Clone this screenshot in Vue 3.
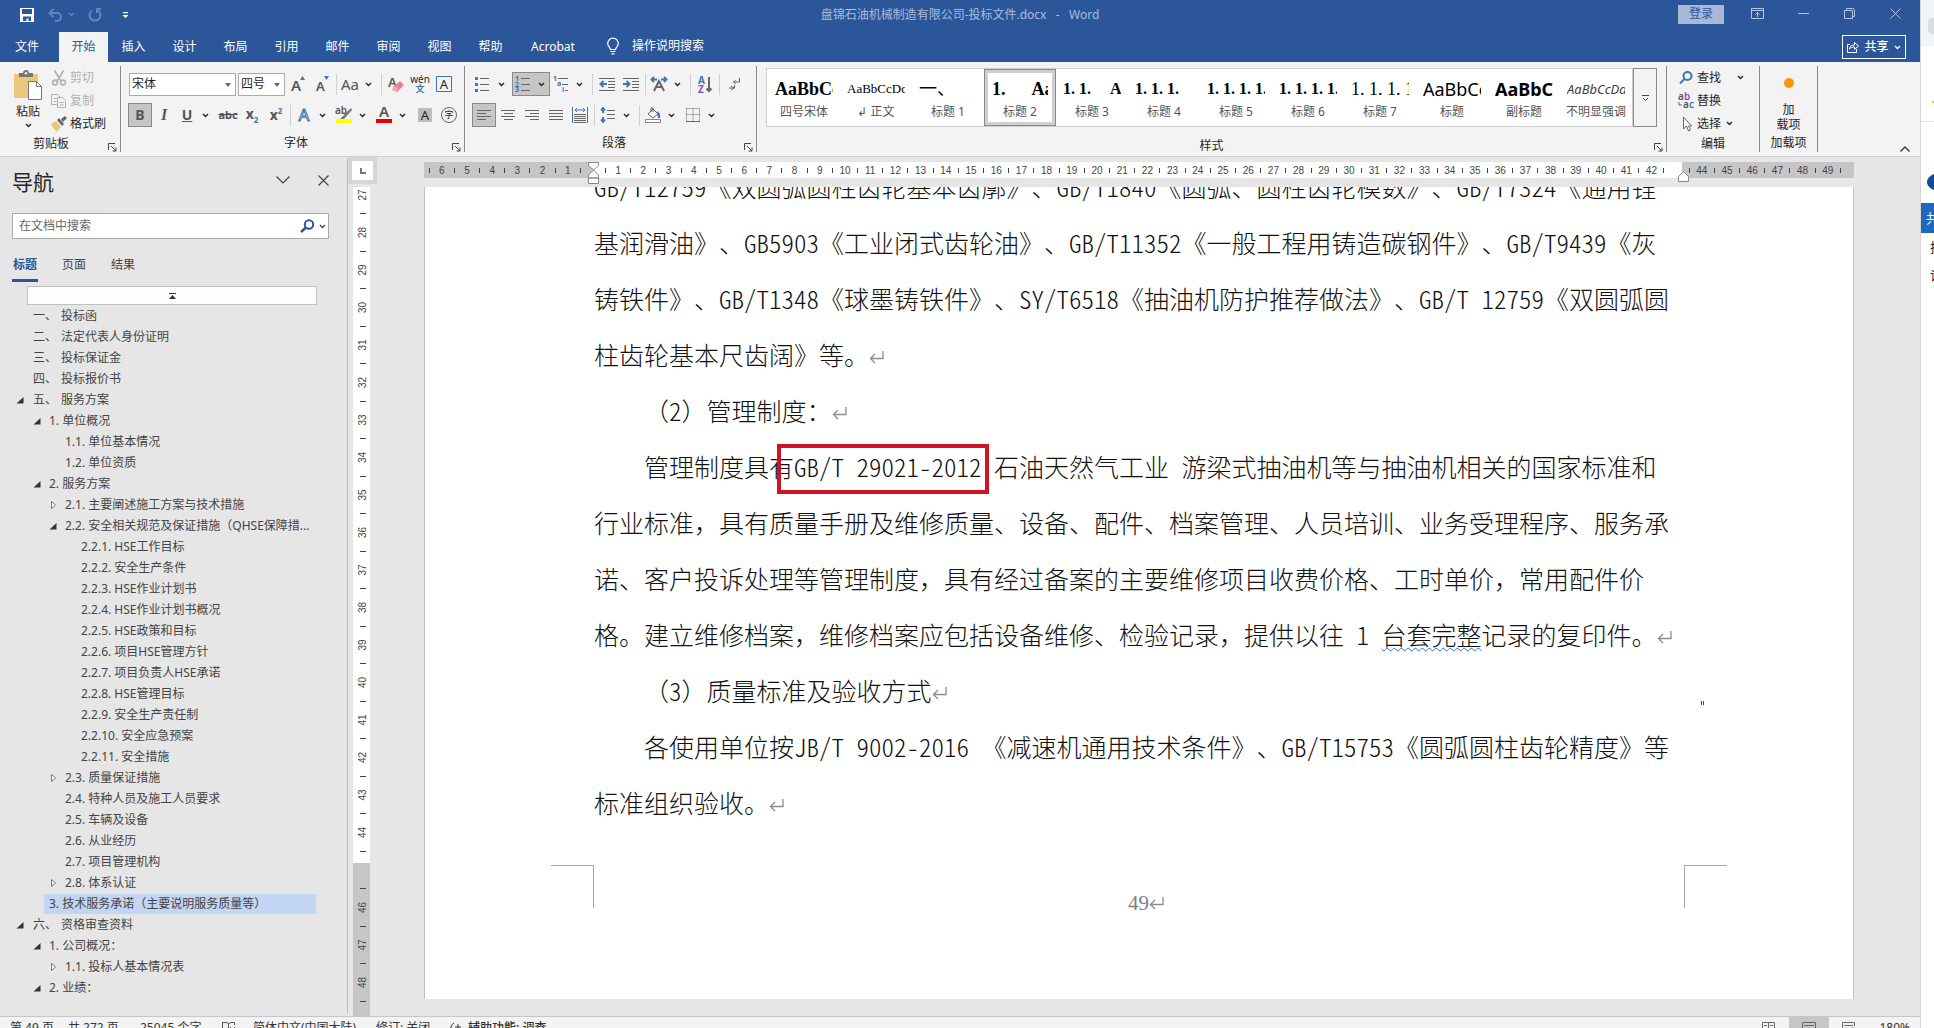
<template>
  <div class="desktop">
    <div class="word">
      <!-- 标题栏 -->
      <header class="titlebar">
        <div class="quick">
          <button class="quick-btn" aria-label="保存">
            <svg width="14" height="14" viewBox="0 0 14 14">
              <path d="M0 0h14v14H0z" fill="#fff" />
              <path d="M2 1h10v5H2zM3 8.500h8V13H8.500v-2.500h-2V13H3z" fill="#2b579a" />
            </svg>
          </button>
          <button class="quick-btn undo" aria-label="撤消">
            <svg width="28" height="14" viewBox="0 0 28 14" fill="none" stroke="#5d86c4" stroke-width="2">
              <path d="M5.500 1L1.500 5l4 4M2 5h7a4 4 0 0 1 0 8H7" />
              <path d="M21 5l2.500 2.500L26 5" stroke-width="1.300" />
            </svg>
          </button>
          <button class="quick-btn" aria-label="恢复">
            <svg width="14" height="14" viewBox="0 0 14 14" fill="none" stroke="#5d86c4" stroke-width="2">
              <path d="M4 2.500a5.500 5.500 0 1 0 6 0M8 1h5M9 0v5" />
            </svg>
          </button>
          <button class="quick-btn more" aria-label="自定义快速访问工具栏">
            <svg width="7" height="7" viewBox="0 0 7 7" fill="#fff"><path d="M1 0h5v1.200H1zM.5 3h6L3.500 6z" /></svg>
          </button>
        </div>
        <div class="doc-name">盘锦石油机械制造有限公司-投标文件.docx&nbsp;&nbsp; -&nbsp;&nbsp; Word</div>
        <div class="window-ctl">
          <button class="login">登录</button>
          <button class="ctl" aria-label="功能区显示选项">
            <svg width="13" height="11" viewBox="0 0 13 11"><path d="M.5.5h12v10H.5zM.5 2.500h12M6.500 9V4.500M4.500 6.500l2-2 2 2" /></svg>
          </button>
          <button class="ctl" aria-label="最小化">
            <svg width="11" height="11" viewBox="0 0 11 11"><path d="M0 5.500h11" /></svg>
          </button>
          <button class="ctl" aria-label="还原">
            <svg width="11" height="11" viewBox="0 0 11 11"><path d="M.5 2.500h8v8h-8zM2.500 2.500v-2h6q2 0 2 2v6h-2" /></svg>
          </button>
          <button class="ctl" aria-label="关闭">
            <svg width="11" height="11" viewBox="0 0 11 11"><path d="M.5.500l10 10M10.500.500l-10 10" /></svg>
          </button>
        </div>
      </header>

      <!-- 选项卡 -->
      <nav class="tabs">
        <button
          v-for="tab in tabs"
          :key="tab"
          class="tab"
          :class="{ active: tab === activeTab, file: tab === '文件', wide: tab === 'Acrobat' }"
          @click="activeTab = tab"
        >
          {{ tab }}
        </button>
        <button class="tell-me">
          <svg width="12" height="17" viewBox="0 0 12 17" fill="none" stroke="#fff" stroke-width="1.200">
            <path d="M3.500 11.500c0-2-2.800-3-2.800-6a5.300 5.300 0 0 1 10.600 0c0 3-2.800 4-2.800 6zM3.500 13.500h5M4.500 15.800h3" />
          </svg>
          操作说明搜索
        </button>
        <button class="share">
          <svg width="12" height="12" viewBox="0 0 12 12" fill="none" stroke="#fff">
            <path d="M3 3.500H.5v8h9V8M2.500 8c.5-3 2-4 5-4V1.500L11.500 5 7.500 8.500V6C5 6 4 6.500 2.500 8z" />
          </svg>
          共享
          <Chevron />
        </button>
      </nav>

      <!-- 功能区 -->
      <section class="ribbon">
        <div class="group clipboard">
          <div class="group-body">
            <button class="paste">
              <svg width="30" height="31" viewBox="0 0 30 31">
                <path d="M1 4h24v24H1z" fill="#ecc67c" />
                <path d="M6 7V3h4a3 3 0 0 1 6 0h4v4z" fill="#777" />
                <circle cx="13" cy="3.200" r="1.200" fill="#f3f3f3" />
                <path d="M15.500 11.500h8l5 5v13h-13z" fill="#fff" stroke="#777" />
                <path d="M23.500 11.500v5h5" fill="none" stroke="#777" />
              </svg>
              <span>粘贴</span>
              <Chevron />
            </button>
            <div class="stack">
              <button class="line-btn off">
                <svg width="16" height="16" viewBox="0 0 16 16" fill="none" stroke="#b1b1b1" stroke-width="1.600">
                  <path d="M3.500.5l6 10M12.500.5l-6 10" /><circle cx="4" cy="12.500" r="2.400" /><circle cx="12" cy="12.500" r="2.400" />
                </svg>
                剪切
              </button>
              <button class="line-btn off">
                <svg width="16" height="16" viewBox="0 0 16 16" fill="#f3f3f3" stroke="#b1b1b1">
                  <path d="M.5 1.500h6l3 3v7h-9zM2.500 5.500h3M2.500 8.500h3" />
                  <path d="M6.500 4.500h5l3 3v7h-8zM8.500 9.500h4M8.500 12h4" />
                </svg>
                复制
              </button>
              <button class="line-btn">
                <svg width="16" height="16" viewBox="0 0 16 16">
                  <path d="M0 8l5-3 5 6-4 5q-4-3-6-8z" fill="#ecc67c" />
                  <path d="M6 4l2-2 5 6-2 2zM10 3l4-3 2 2-4 4z" fill="#666" />
                </svg>
                格式刷
              </button>
            </div>
          </div>
          <div class="group-label">剪贴板<Launcher /></div>
        </div>

        <div class="group font">
          <div class="group-body rows">
            <div class="tool-row">
              <label class="combo family">
                <select aria-label="字体"><option>宋体</option></select>
                <i class="caret"></i>
              </label>
              <label class="combo size">
                <select aria-label="字号"><option>四号</option></select>
                <i class="caret"></i>
              </label>
              <button class="tool" aria-label="增大字号">
                <svg width="16" height="18" viewBox="0 0 16 18"><text x="1" y="16" class="glyph big">A</text><path d="M10 5l2.500-4L15 5z" fill="#3c78b4" /></svg>
              </button>
              <button class="tool" aria-label="减小字号">
                <svg width="16" height="18" viewBox="0 0 16 18"><text x="2" y="16" class="glyph">A</text><path d="M10 1l2.500 4L15 1z" fill="#3c78b4" /></svg>
              </button>
              <i class="sep"></i>
              <button class="split" aria-label="更改大小写"><span class="face case">Aa</span><Chevron /></button>
              <i class="sep"></i>
              <button class="tool" aria-label="清除所有格式">
                <svg width="16" height="18" viewBox="0 0 16 18">
                  <text x="0" y="12" class="glyph">A</text>
                  <path d="M5 12l7-6 4 4-7 7-4-2z" fill="#e8808f" /><path d="M4 14l3-3 3 3-2 2H5z" fill="#f3a9b4" />
                </svg>
              </button>
              <button class="tool pinyin"><span>wén</span><b>文</b></button>
              <button class="tool"><span class="framed">A</span></button>
            </div>
            <div class="tool-row">
              <button class="tool on"><b class="face">B</b></button>
              <button class="tool"><b class="face italic">I</b></button>
              <button class="split"><b class="face underline">U</b><Chevron /></button>
              <button class="tool"><b class="face strike">abc</b></button>
              <button class="tool"><b class="face">x<sub>2</sub></b></button>
              <button class="tool"><b class="face">x<sup>2</sup></b></button>
              <i class="sep"></i>
              <button class="split"><span class="face effect">A</span><Chevron /></button>
              <button class="split" aria-label="突出显示">
                <svg width="18" height="18" viewBox="0 0 18 18">
                  <text x="0" y="8" class="glyph small">ab</text>
                  <path d="M16 2l-8 8-3 3h4l8-9z" fill="#777" /><path d="M1 13h16v4H1z" fill="#ff0" />
                </svg>
                <Chevron />
              </button>
              <button class="split" aria-label="字体颜色">
                <svg width="18" height="18" viewBox="0 0 18 18"><text x="4" y="11" class="glyph big">A</text><path d="M1 13h16v4H1z" fill="#e60000" /></svg>
                <Chevron />
              </button>
              <button class="tool"><span class="shade">A</span></button>
              <button class="tool"><span class="circled">字</span></button>
            </div>
          </div>
          <div class="group-label">字体<Launcher /></div>
        </div>

        <div class="group para">
          <div class="group-body rows">
            <div class="tool-row">
              <button class="split" aria-label="项目符号">
                <svg width="16" height="16" viewBox="0 0 16 16">
                  <path d="M5 2.500h9M5 8.500h9M5 14.500h9" class="ink" />
                  <path d="M0 1h3v3H0zM0 7h3v3H0zM0 13h3v3H0z" fill="#3c78b4" />
                </svg>
                <Chevron />
              </button>
              <button class="split on" aria-label="编号">
                <svg width="16" height="16" viewBox="0 0 16 16">
                  <path d="M6 2.500h9M6 8.500h9M6 14.500h9" class="ink" />
                  <text x="0" y="5" class="tiny">1</text><text x="0" y="10.500" class="tiny">2</text><text x="0" y="16" class="tiny">3</text>
                </svg>
                <Chevron />
              </button>
              <button class="split" aria-label="多级列表">
                <svg width="16" height="16" viewBox="0 0 16 16">
                  <path d="M5 2.500h10M9 8.500h6M12 14.500h3" class="ink" />
                  <text x="0" y="5" class="tiny">1</text><text x="4" y="10" class="tiny">a</text><text x="9" y="16" class="tiny">i</text>
                </svg>
                <Chevron />
              </button>
              <i class="sep"></i>
              <button class="tool" aria-label="减少缩进量">
                <svg width="16" height="15" viewBox="0 0 16 15"><path d="M0 1.500h16M9 4.500h7M9 7.500h7M9 10.500h7M0 13.500h16" class="ink" /><path d="M8 7H2M4.500 4L1.500 7l3 3" class="blue" /></svg>
              </button>
              <button class="tool" aria-label="增加缩进量">
                <svg width="16" height="15" viewBox="0 0 16 15"><path d="M0 1.500h16M9 4.500h7M9 7.500h7M9 10.500h7M0 13.500h16" class="ink" /><path d="M0 7h6M3.500 4l3 3-3 3" class="blue" /></svg>
              </button>
              <i class="sep"></i>
              <button class="split" aria-label="中文版式">
                <svg width="18" height="16" viewBox="0 0 18 16"><path d="M4 15L9 5l5 10M6 11h6" class="ink bold" /><path d="M7 3.500H2M4 1L1.500 3.500 4 6M11 3.500h5M14 1l2.500 2.500L14 6" class="blue" /></svg>
                <Chevron />
              </button>
              <i class="sep"></i>
              <button class="tool" aria-label="排序">
                <svg width="16" height="17" viewBox="0 0 16 17"><text x="1" y="8" class="sort">A</text><text x="1" y="17" class="sort z">Z</text><path d="M12 1v14M9.500 12.500L12 15l2.500-2.500" class="ink bold" /></svg>
              </button>
              <i class="sep"></i>
              <button class="tool" aria-label="显示编辑标记">
                <svg width="13" height="14" viewBox="0 0 13 14"><path d="M11.500 1v4H5.500M7.500 3l-2 2 2 2M6.500 8v3H1M3 9l3 2-3 2" class="ink" /></svg>
              </button>
            </div>
            <div class="tool-row">
              <button class="tool on" aria-label="左对齐"><svg width="16" height="12" viewBox="0 0 16 12"><path d="M1 1.500h14M1 4.500h9M1 7.500h14M1 10.500h9" class="ink" /></svg></button>
              <button class="tool" aria-label="居中"><svg width="16" height="12" viewBox="0 0 16 12"><path d="M1 1.500h14M4 4.500h9M1 7.500h14M4 10.500h9" class="ink" /></svg></button>
              <button class="tool" aria-label="右对齐"><svg width="16" height="12" viewBox="0 0 16 12"><path d="M1 1.500h14M6 4.500h9M1 7.500h14M6 10.500h9" class="ink" /></svg></button>
              <button class="tool" aria-label="两端对齐"><svg width="16" height="12" viewBox="0 0 16 12"><path d="M1 1.500h14M1 4.500h14M1 7.500h14M1 10.500h14" class="ink" /></svg></button>
              <button class="tool" aria-label="分散对齐">
                <svg width="16" height="16" viewBox="0 0 16 16"><path d="M2 7.500h12M2 9.500h12M2 11.500h12M2 13.500h12M2 15.500h12" class="ink" /><path d="M.5 0v16M15.500 0v16M3 3h10M5 1L3 3l2 2M11 1l2 2-2 2" class="blue thin" /></svg>
              </button>
              <i class="sep"></i>
              <button class="split" aria-label="行和段落间距">
                <svg width="16" height="16" viewBox="0 0 16 16"><path d="M7 3.500h8M7 7.500h8M7 11.500h8" class="ink" /><path d="M3 1v5M1 3.500l2-2.500 2 2.500M3 10v5M1 12.500L3 15l2-2.500" class="blue" /></svg>
                <Chevron />
              </button>
              <i class="sep"></i>
              <button class="split" aria-label="底纹">
                <svg width="18" height="16" viewBox="0 0 18 16"><path d="M4 7l5-5 5 5-5 4zM7 5V1h2v4" class="ink" /><path d="M13 4q4 2 3 7h-2z" fill="#3c78b4" /><path d="M1.500 12.500h15v3h-15z" fill="#fff" stroke="#888" /></svg>
                <Chevron />
              </button>
              <button class="split" aria-label="边框">
                <svg width="14" height="14" viewBox="0 0 14 14"><path d="M.5.500h13v12.500M.5.500v12.500M7 .5v13M.5 6.500h13" class="ink dots" /><path d="M0 13.500h14" class="ink" /></svg>
                <Chevron />
              </button>
            </div>
          </div>
          <div class="group-label">段落<Launcher /></div>
        </div>

        <div class="group styles">
          <div class="group-body">
            <div class="gallery">
              <button v-for="s in styles" :key="s.name" class="style-cell" :class="{ picked: s.picked }">
                <span class="sample" :class="s.look">{{ s.sample }}</span>
                <span class="style-name">{{ s.name }}</span>
              </button>
            </div>
            <button class="gallery-more" aria-label="其他样式">
              <svg width="7" height="6" viewBox="0 0 7 6"><path d="M0 .5h7M1 3l2.500 2.500L6 3" fill="none" stroke="#444" /></svg>
            </button>
          </div>
          <div class="group-label">样式<Launcher /></div>
        </div>

        <div class="group edit">
          <div class="group-body stack">
            <button class="line-btn">
              <svg width="16" height="16" viewBox="0 0 16 16" fill="none" stroke="#3c78b4" stroke-width="2"><circle cx="9.500" cy="6" r="4" /><path d="M6.500 9L2 13.500" /></svg>
              查找<Chevron class="far" />
            </button>
            <button class="line-btn">
              <svg width="16" height="16" viewBox="0 0 16 16"><text x="0" y="7" class="glyph small">a</text><text x="6" y="7" class="glyph small z">b</text><text x="5" y="15" class="glyph small">a</text><text x="11" y="15" class="glyph small b">c</text><path d="M1 9v3h3" class="blue thin" /></svg>
              替换
            </button>
            <button class="line-btn">
              <svg width="16" height="16" viewBox="0 0 16 16"><path d="M5.500 1v12l3-3 2 5 2-1-2-4h3z" fill="#fff" stroke="#666" /></svg>
              选择<Chevron />
            </button>
          </div>
          <div class="group-label">编辑</div>
        </div>

        <div class="group addin">
          <div class="group-body">
            <button class="addin-btn"><i class="dot"></i><span>加<br />载项</span></button>
          </div>
          <div class="group-label">加载项</div>
        </div>
        <button class="collapse" aria-label="折叠功能区">
          <svg width="10" height="6" viewBox="0 0 10 6"><path d="M.5 5.500L5 1l4.500 4.500" fill="none" stroke="#333" stroke-width="1.300" /></svg>
        </button>
      </section>

      <main class="workspace">
        <!-- 导航窗格 -->
        <aside class="navpane">
          <div class="nav-head">
            <h2>导航</h2>
            <button aria-label="任务窗格选项"><svg width="14" height="8" viewBox="0 0 14 8"><path d="M.5.500L7 7 13.500.500" /></svg></button>
            <button aria-label="关闭窗格"><svg width="11" height="11" viewBox="0 0 11 11"><path d="M.5.500l10 10M10.500.500l-10 10" /></svg></button>
          </div>
          <div class="search">
            <input v-model="query" type="text" placeholder="在文档中搜索" aria-label="在文档中搜索" />
            <svg width="15" height="14" viewBox="0 0 15 14" fill="none" stroke="#2b579a" stroke-width="2"><circle cx="9" cy="5.500" r="4.200" /><path d="M6 8.500L1 13" stroke-width="2.500" /></svg>
            <Chevron />
          </div>
          <div class="nav-tabs">
            <button class="active">标题</button>
            <button>页面</button>
            <button>结果</button>
          </div>
          <button class="jump-top" aria-label="跳转到开头">
            <svg width="7" height="6" viewBox="0 0 7 6" fill="#333"><path d="M0 0h7v1H0zM3.500 2L7 6H0z" /></svg>
          </button>
          <ul class="outline">
            <li v-for="item in outline" :key="item.text" :class="['level-' + item.level, { current: item.current }]">
              <svg class="twisty" width="8" height="8" viewBox="0 0 8 8">
                <path v-if="item.fold === 'open'" d="M7.500 1v6.500H.5z" fill="#333" />
                <path v-if="item.fold === 'closed'" d="M2.500.5L6.500 4l-4 3.500z" fill="#fff" stroke="#777" />
              </svg>
              <a href="#"><span v-if="item.mark" class="mark">{{ item.mark }}</span>{{ item.text }}</a>
            </li>
          </ul>
        </aside>

        <!-- 垂直标尺 -->
        <div class="v-side">
          <div class="corner">
            <svg width="6" height="6" viewBox="0 0 6 6"><path d="M1 0v5h5" fill="none" stroke="#777" stroke-width="2" /></svg>
          </div>
          <svg class="v-ruler" width="17" height="829">
            <rect width="17" height="676" fill="#fff" />
            <rect y="676" width="17" height="153" fill="#c6c6c6" />
            <g v-for="n in vMarks" :key="n">
              <text v-if="n !== 45" :transform="`translate(13 ${vPos(n)}) rotate(-90)`" text-anchor="middle">{{ n }}</text>
              <path :d="`M7 ${Math.round(vPos(n) + 18)}.5h6`" stroke="#444" />
            </g>
          </svg>
        </div>

        <!-- 文档 -->
        <div class="doc-area">
          <svg class="h-ruler" width="100%" height="22">
            <rect y="0" width="100%" height="16" fill="#c6c6c6" />
            <rect x="170" width="1088" height="16" fill="#fff" />
            <g v-for="n in hMarks" :key="n">
              <text v-if="n > -7 && n !== 0 && n !== 43" :x="hPos(n)" y="12" text-anchor="middle">{{ Math.abs(n) }}</text>
              <path :d="`M${Math.round(hPos(n) + 12)}.5 6v5`" stroke="#444" />
            </g>
            <path d="M164.500.500h10v3l-5 4.500-5-4.500z M164.500 16v-3l5-5 5 5v3z M164.500 16h10v5.500h-10z" fill="#fff" stroke="#888" />
            <path d="M1254.500 19.500v-5l5-5 5 5v5z" fill="#fff" stroke="#888" />
          </svg>
          <article class="page">
            <div class="body">
              <p v-for="(line, i) in lines" :key="i" :class="{ indent: line.indent }">
                <span v-for="(part, j) in split(line.text)" :key="j" :class="part.kind">{{ part.text }}</span><ReturnMark v-if="line.end" />
              </p>
            </div>
            <i class="callout"></i>
            <i class="speck"></i>
            <footer class="page-foot">
              <i class="crop left"></i>
              <span class="page-no">49<ReturnMark /></span>
              <i class="crop right"></i>
            </footer>
          </article>
        </div>
      </main>

      <!-- 状态栏 -->
      <footer class="statusbar">
        <div class="status-inner">
          <span class="w58">第 49 页</span>
          <span class="w72">共 272 页</span>
          <span class="w82">25045 个字</span>
          <span class="w31"><svg width="14" height="12" viewBox="0 0 14 12" fill="none" stroke="#555"><path d="M6.500 11V1.500q-2-1.500-6-1v10q4-.5 6 1zM6.500 1.500q2-1.500 6-1V3M8 5l5 6M13 5l-5 6" /></svg></span>
          <span class="w123">简体中文(中国大陆)</span>
          <span class="w73">修订: 关闭</span>
          <span class="a11y"><svg width="14" height="12" viewBox="0 0 14 12" fill="none" stroke="#333"><path d="M5 1a5.500 5.500 0 0 0 0 10M9 2v8M6 5h6M9 6l3 4" /></svg>辅助功能: 调查</span>
          <span class="views">
            <i><svg width="14" height="12" viewBox="0 0 14 12"><path d="M.5.500h6v11h-6zM6.500.500h6v11h-6zM2 3.500h3M2 6.500h3M8 3.500h3M8 6.500h3" class="ink" /></svg></i>
            <i class="on"><svg width="14" height="12" viewBox="0 0 14 12"><path d="M.5.500h13v11H.5zM2 3.500h10M2 6.500h10M2 9.500h10" class="ink" /></svg></i>
            <i><svg width="14" height="12" viewBox="0 0 14 12"><path d="M12.500 4V.5H.5v11h6M2 3.500h9M2 6.500h5M2 9.500h4" class="ink" /><circle cx="10.500" cy="8.500" r="3" fill="#777" /></svg></i>
            <span>180%</span>
          </span>
        </div>
      </footer>
    </div>

    <!-- 旁边露出的窗口 -->
    <div class="behind">
      <div class="behind-bar"><i></i></div>
      <div class="behind-fav"><i></i></div>
      <div class="behind-logo"><i></i></div>
      <div class="behind-menu">共</div>
      <div class="behind-item">技</div>
      <div class="behind-item">设</div>
    </div>
  </div>
</template>

<script setup>
import { h, ref } from "vue";

// Iconos pequeños que se repiten
const Chevron = () =>
  h("svg", { class: "chev", width: 7, height: 5, viewBox: "0 0 7 5" }, [
    h("path", { d: "M1 1l2.500 2.500L6 1", fill: "none", stroke: "currentColor", "stroke-width": 1.4 }),
  ]);

const Launcher = () =>
  h("svg", { class: "launcher", width: 9, height: 9, viewBox: "0 0 9 9" }, [
    h("path", { d: "M.5 7V.5H7M3 3l5 5M8 4.500V8H4.500", fill: "none", stroke: "#444" }),
  ]);

const ReturnMark = () =>
  h("svg", { class: "return-mark", width: 15, height: 13, viewBox: "0 0 15 13" }, [
    h("path", { d: "M14 0v7.500H1.500M6 3L1.500 7.500 6 12", fill: "none", stroke: "#8c8c8c", "stroke-width": 1.3 }),
  ]);

const tabs = ["文件", "开始", "插入", "设计", "布局", "引用", "邮件", "审阅", "视图", "帮助", "Acrobat"];
const activeTab = ref("开始");
const query = ref("");

const styles = [
  { name: "四号宋体", sample: "AaBbCc", look: "serif heavy" },
  { name: "↲ 正文", sample: "AaBbCcDdEe", look: "serif little" },
  { name: "标题 1", sample: "一、", look: "serif" },
  { name: "标题 2", sample: "1.      Aa", look: "serif heavy", picked: true },
  { name: "标题 3", sample: "1. 1.     Aa", look: "serif heavy mid" },
  { name: "标题 4", sample: "1. 1. 1.", look: "serif heavy mid" },
  { name: "标题 5", sample: "1. 1. 1. 1.", look: "serif heavy mid" },
  { name: "标题 6", sample: "1. 1. 1. 1.", look: "serif heavy mid" },
  { name: "标题 7", sample: "1. 1. 1. 1.", look: "serif" },
  { name: "标题", sample: "AaBbCc", look: "sans" },
  { name: "副标题", sample: "AaBbCc", look: "sans heavy" },
  { name: "不明显强调", sample: "AaBbCcDd", look: "sans slanted" },
];

const outline = [
  { level: 1, mark: "一、", text: "投标函" },
  { level: 1, mark: "二、", text: "法定代表人身份证明" },
  { level: 1, mark: "三、", text: "投标保证金" },
  { level: 1, mark: "四、", text: "投标报价书" },
  { level: 1, mark: "五、", text: "服务方案", fold: "open" },
  { level: 2, text: "1. 单位概况", fold: "open" },
  { level: 3, text: "1.1. 单位基本情况" },
  { level: 3, text: "1.2. 单位资质" },
  { level: 2, text: "2. 服务方案", fold: "open" },
  { level: 3, text: "2.1. 主要阐述施工方案与技术措施", fold: "closed" },
  { level: 3, text: "2.2. 安全相关规范及保证措施（QHSE保障措...", fold: "open" },
  { level: 4, text: "2.2.1. HSE工作目标" },
  { level: 4, text: "2.2.2. 安全生产条件" },
  { level: 4, text: "2.2.3. HSE作业计划书" },
  { level: 4, text: "2.2.4. HSE作业计划书概况" },
  { level: 4, text: "2.2.5. HSE政策和目标" },
  { level: 4, text: "2.2.6. 项目HSE管理方针" },
  { level: 4, text: "2.2.7. 项目负责人HSE承诺" },
  { level: 4, text: "2.2.8. HSE管理目标" },
  { level: 4, text: "2.2.9. 安全生产责任制" },
  { level: 4, text: "2.2.10. 安全应急预案" },
  { level: 4, text: "2.2.11. 安全措施" },
  { level: 3, text: "2.3. 质量保证措施", fold: "closed" },
  { level: 3, text: "2.4. 特种人员及施工人员要求" },
  { level: 3, text: "2.5. 车辆及设备" },
  { level: 3, text: "2.6. 从业经历" },
  { level: 3, text: "2.7. 项目管理机构" },
  { level: 3, text: "2.8. 体系认证", fold: "closed" },
  { level: 2, text: "3. 技术服务承诺（主要说明服务质量等）", current: true },
  { level: 1, mark: "六、", text: "资格审查资料", fold: "open" },
  { level: 2, text: "1. 公司概况：", fold: "open" },
  { level: 3, text: "1.1. 投标人基本情况表", fold: "closed" },
  { level: 2, text: "2. 业绩：", fold: "open" },
];

const lines = [
  { text: "GB/T12759《双圆弧圆柱齿轮基本齿廓》、GB/T1840《圆弧、圆柱齿轮模数》、GB/T7324《通用锂" },
  { text: "基润滑油》、GB5903《工业闭式齿轮油》、GB/T11352《一般工程用铸造碳钢件》、GB/T9439《灰" },
  { text: "铸铁件》、GB/T1348《球墨铸铁件》、SY/T6518《抽油机防护推荐做法》、GB/T 12759《双圆弧圆" },
  { text: "柱齿轮基本尺齿阔》等。", end: true },
  { text: "（2）管理制度：", indent: true, end: true },
  { text: "管理制度具有GB/T 29021-2012 石油天然气工业 游梁式抽油机等与抽油机相关的国家标准和", indent: true },
  { text: "行业标准，具有质量手册及维修质量、设备、配件、档案管理、人员培训、业务受理程序、服务承" },
  { text: "诺、客户投诉处理等管理制度，具有经过备案的主要维修项目收费价格、工时单价，常用配件价" },
  { text: "格。建立维修档案，维修档案应包括设备维修、检验记录，提供以往 1 台套完整记录的复印件。", end: true },
  { text: "（3）质量标准及验收方式", indent: true, end: true },
  { text: "各使用单位按JB/T 9002-2016 《减速机通用技术条件》、GB/T15753《圆弧圆柱齿轮精度》等", indent: true },
  { text: "标准组织验收。", end: true },
];

// Las letras y cifras latinas ocupan media celda; lo demás, la celda entera
const split = (text) =>
  text
    .split(/([\x20-\x7e]+|台套完整)/)
    .filter(Boolean)
    .map((t) => ({ text: t, kind: t === "台套完整" ? "wavy" : /^[\x20-\x7e]/.test(t) ? "half" : "" }));

// Marcas de las reglas
const hMarks = Array.from({ length: 57 }, (_, i) => i - 7);
const vMarks = Array.from({ length: 22 }, (_, i) => i + 27);
const hPos = (n) => 169 + n * 25.2;
const vPos = (n) => 8 + (n - 27) * 37.5;
</script>

<style>
body {
  margin: 0;
  overflow: hidden;
}
</style>

<style scoped>
.desktop {
  display: flex;
  height: 100vh;
  overflow: hidden;
  font-family: "Noto Sans", "Noto Sans CJK SC", sans-serif;
  font-size: 12px;
  line-height: 16px;
  color: #262626;
  text-spacing-trim: space-all;
}

button {
  display: inline-flex;
  align-items: center;
  justify-content: center;
  padding: 0;
  border: none;
  background: none;
  color: inherit;
  font: inherit;
}

svg {
  display: block;
  flex: none;
  overflow: visible;
}

.word {
  display: flex;
  flex-direction: column;
  flex: 1;
  min-width: 0;
  background: #e6e6e6;
}

/* Barra de título */
.titlebar {
  display: grid;
  grid-template-columns: 1fr auto 1fr;
  height: 30px;
  background: #2b579a;
}

.quick {
  display: flex;
  align-items: center;
  gap: 12px;
  padding-left: 20px;
}

.quick .undo {
  margin-left: 2px;
}

.quick .more {
  margin-left: 8px;
}

.doc-name {
  line-height: 30px;
  color: #a9bcdb;
}

.window-ctl {
  display: flex;
  justify-content: flex-end;
  align-items: center;
  height: 26px;
  padding-right: 2px;
}

.login {
  width: 46px;
  height: 19px;
  margin: 2px 10px 0 0;
  background: #a7b9d7;
  color: #2b579a;
}

.ctl {
  width: 46px;
  height: 26px;
}

.ctl path {
  fill: none;
  stroke: #b5c5df;
}

/* Pestañas */
.tabs {
  display: flex;
  height: 32px;
  padding-right: 14px;
  background: #2b579a;
  color: #fff;
}

.tab {
  width: 51px;
  height: 30px;
  margin-top: 2px;
}

.tab.file {
  width: 54px;
  margin-right: 5px;
}

.tab.active {
  width: 49px;
  background: #f3f3f3;
  color: #2b579a;
}

.tab.wide {
  width: 74px;
}

.tell-me {
  gap: 13px;
  margin-left: 17px;
}

.share {
  gap: 5px;
  box-sizing: border-box;
  width: 64px;
  height: 24px;
  margin: 5px 0 0 auto;
  border: 1px solid #fff;
  font-weight: 500;
}

/* Cinta de opciones */
.ribbon {
  display: flex;
  height: 94px;
  border-bottom: 1px solid #cfcfcf;
  background: #f3f3f3;
}

.group {
  display: flex;
  flex-direction: column;
  position: relative;
  box-sizing: border-box;
  height: 86px;
  margin-top: 4px;
  border-right: 1px solid #8a8a8a;
}

.group-body {
  display: flex;
  height: 72px;
}

.group-label {
  display: flex;
  justify-content: center;
  line-height: 18px;
}

.launcher {
  position: absolute;
  right: 3px;
  bottom: 0;
}

.clipboard {
  width: 121px;
}

.clipboard .group-label {
  padding-right: 18px;
}

.paste {
  flex-direction: column;
  justify-content: flex-start;
  gap: 3px;
  width: 40px;
  margin-left: 8px;
  padding-top: 4px;
}

.stack {
  display: flex;
  flex-direction: column;
}

.line-btn {
  justify-content: flex-start;
  gap: 3px;
  height: 23px;
  padding-left: 3px;
}

.line-btn .chev {
  margin-left: 2px;
}

.line-btn .chev.far {
  margin-left: 13px;
}

.off {
  color: #b1b1b1;
}

.font {
  width: 344px;
  padding-left: 7px;
}

.para {
  width: 292px;
  padding-left: 7px;
}

.rows {
  flex-direction: column;
  gap: 7px;
  padding-top: 6px;
  box-sizing: border-box;
}

.tool-row {
  display: flex;
  align-items: center;
  height: 24px;
}

.combo {
  position: relative;
  width: 105px;
  height: 21px;
  margin: 0 1px;
  border: 1px solid #ababab;
  background: #fff;
}

.combo.size {
  width: 45px;
}

.combo select {
  width: 100%;
  height: 21px;
  padding: 0 2px;
  border: none;
  background: none;
  appearance: none;
  font: inherit;
  color: #262626;
}

.caret {
  position: absolute;
  top: 9px;
  right: 4px;
  border: 3px solid transparent;
  border-top: 4px solid #666;
  border-bottom: none;
}

.tool {
  width: 24px;
  height: 24px;
}

.split {
  display: grid;
  grid-template-columns: 22px 14px;
  justify-items: center;
  justify-content: start;
  width: 40px;
  height: 24px;
}

.split.on {
  width: 38px;
}

.on {
  background: #c6c6c6;
  outline: 1px solid #8a8a8a;
  outline-offset: -1px;
}

.sep {
  width: 1px;
  height: 21px;
  margin: 0 2px;
  background: #d0d0d0;
}

.face {
  font-size: 14px;
  color: #555;
}

.case {
  font-size: 15px;
}

.italic {
  font-family: "Liberation Serif", serif;
  font-size: 16px;
  font-style: italic;
}

.underline {
  text-decoration: underline;
}

.strike {
  font-size: 11px;
  text-decoration: line-through;
}

sub,
sup {
  font-size: 8px;
  line-height: 1;
  color: #3c78b4;
}

.effect {
  font-size: 17px;
  color: #fff;
  -webkit-text-stroke: 1px #3c78b4;
}

.glyph {
  font-size: 13px;
  font-weight: 600;
  fill: #555;
}

.glyph.big {
  font-size: 15px;
}

.glyph.small {
  font-size: 10px;
}

.glyph.z {
  fill: #8e4bb0;
}

.glyph.b {
  fill: #3c78b4;
}

.tiny {
  font-size: 7px;
  font-weight: 700;
  fill: #3c78b4;
}

.sort {
  font-size: 10px;
  font-weight: 700;
  fill: #3c78b4;
}

.sort.z {
  fill: #8e4bb0;
}

.ink {
  fill: none;
  stroke: #666;
}

.ink.bold {
  stroke-width: 2;
}

.ink.dots {
  stroke-dasharray: 1 1;
}

.blue {
  fill: none;
  stroke: #3c78b4;
  stroke-width: 2;
}

.blue.thin {
  stroke-width: 1;
}

.pinyin {
  flex-direction: column;
  font-size: 10px;
  line-height: 9px;
}

.pinyin b {
  font-size: 9px;
  color: #3c78b4;
}

.framed {
  width: 14px;
  border: 1px solid #3c78b4;
  font-size: 13px;
  line-height: 14px;
}

.shade {
  width: 14px;
  background: #bdbdbd;
  font-size: 13px;
  line-height: 14px;
}

.circled {
  width: 14px;
  border: 1px solid #666;
  border-radius: 50%;
  font-size: 9px;
  line-height: 14px;
}

/* Galería de estilos */
.styles {
  flex: 1;
  min-width: 0;
  padding: 0 9px;
}

.styles .group-body {
  height: 60px;
  padding: 2px 0 10px;
}

.gallery {
  display: flex;
  flex: 1;
  min-width: 0;
  overflow: hidden;
  padding-left: 1px;
  border: 1px solid #d0d0d0;
  background: #fff;
}

.style-cell {
  flex-direction: column;
  gap: 4px;
  flex: none;
  box-sizing: border-box;
  width: 72px;
  height: 57px;
  padding: 2px 7px 0;
  overflow: hidden;
}

.style-cell.picked {
  border: 1px solid #8a8a8a;
  box-shadow: inset 0 0 0 3px #d0cece;
}

.sample {
  align-self: stretch;
  overflow: hidden;
  height: 22px;
  line-height: 22px;
  text-align: left;
  white-space: pre;
  color: #000;
}

.serif {
  font-family: "Liberation Serif", "Noto Sans CJK SC", serif;
  font-size: 18px;
}

.sans {
  font-size: 18px;
}

.little {
  font-size: 13px;
}

.heavy {
  font-weight: 700;
}

.mid {
  font-size: 16px;
}

.slanted {
  font-size: 13px;
  font-style: italic;
  color: #404040;
}

.style-name {
  white-space: nowrap;
  color: #555;
}

.gallery-more {
  width: 24px;
  box-sizing: border-box;
  border: 1px solid #8a8a8a;
}

.edit {
  width: 93px;
  padding-left: 8px;
}

.edit .group-label {
  padding-right: 8px;
}

.addin {
  width: 58px;
}

.addin-btn {
  flex: 1;
  flex-direction: column;
  justify-content: flex-start;
  gap: 14px;
  padding-top: 12px;
  line-height: 15px;
}

.dot {
  width: 10px;
  height: 10px;
  border-radius: 50%;
  background: #ff9500;
}

.collapse {
  align-self: flex-end;
  width: 10px;
  margin: 0 10px 4px 82px;
}

/* Panel de navegación */
.workspace {
  display: flex;
  flex: 1;
  min-height: 0;
  overflow: hidden;
}

.navpane {
  display: flex;
  flex-direction: column;
  box-sizing: border-box;
  width: 348px;
  margin: 2px 0 3px;
  padding: 0 18px 0 12px;
  border-right: 1px solid #bdbdbd;
  color: #444;
}

.nav-head {
  display: flex;
  align-items: center;
  height: 46px;
  gap: 28px;
  margin-bottom: 8px;
}

.nav-head h2 {
  margin: 0 auto 0 0;
  font-size: 21px;
  font-weight: 400;
  line-height: 46px;
  color: #262626;
}

.nav-head button {
  padding-bottom: 4px;
}

.nav-head path {
  fill: none;
  stroke: #444;
  stroke-width: 1.2;
}

.search {
  display: flex;
  align-items: center;
  gap: 4px;
  height: 24px;
  padding: 0 2px 0 6px;
  border: 1px solid #ababab;
  background: #fff;
}

.search input {
  flex: 1;
  min-width: 0;
  padding: 0;
  border: none;
  outline: none;
  font: inherit;
}

.search input::placeholder {
  color: #666;
}

.nav-tabs {
  display: flex;
  gap: 23px;
  height: 43px;
  margin-bottom: 4px;
}

.nav-tabs button {
  box-sizing: border-box;
  padding: 11px 1px 0;
  border-bottom: 3px solid transparent;
}

.nav-tabs .active {
  border-color: #2b579a;
  color: #2b579a;
  font-weight: 700;
}

.jump-top {
  flex: none;
  box-sizing: border-box;
  height: 19px;
  margin: 0 12px 0 15px;
  border: 1px solid #c0c0c0;
  background: #fdfdfd;
}

.outline {
  margin: 0;
  padding: 0;
  list-style: none;
}

.outline li {
  display: flex;
  align-items: center;
  height: 21px;
  margin-right: 13px;
}

.outline a {
  flex: 1;
  padding-left: 5px;
  line-height: 20px;
  white-space: nowrap;
  color: #444;
  text-decoration: none;
}

.twisty {
  margin-left: 4px;
}

.level-1 .mark {
  display: inline-block;
  width: 28px;
}

.level-1 .twisty {
  margin-right: 4px;
}

.level-2 .twisty {
  margin-left: 21px;
}

.level-3 .twisty {
  margin-left: 37px;
}

.level-4 .twisty {
  margin-left: 53px;
}

.level-2 .twisty,
.level-3 .twisty,
.level-4 .twisty {
  margin-right: 3px;
}

.outline .current a {
  background: #c2d5f2;
}

/* Regla vertical */
.v-side {
  width: 29px;
  overflow: hidden;
}

.corner {
  display: flex;
  align-items: center;
  justify-content: center;
  box-sizing: border-box;
  height: 27px;
  margin-bottom: 3px;
  border: 4px solid #d6d6d6;
  background: #fdfdfd;
}

.v-ruler {
  margin-left: 5px;
}

.v-ruler text,
.h-ruler text {
  font-family: "Liberation Sans", sans-serif;
  font-size: 10px;
  fill: #444;
}

/* Documento */
.doc-area {
  display: flex;
  flex-direction: column;
  flex: 1;
  min-width: 0;
  padding: 5px 66px 17px 47px;
}

.h-ruler {
  margin-bottom: 3px;
}

.page {
  position: relative;
  flex: 1;
  min-height: 0;
  overflow: hidden;
  border: 1px solid #c0c0c0;
  border-width: 0 1px;
  background: #fff;
}

.body {
  margin-top: -29px;
  padding-left: 169px;
  font-family: "SimSun", "Noto Sans CJK SC", sans-serif;
  font-size: 25px;
  font-weight: 300;
  color: #111;
}

.body p {
  height: 56px;
  margin: 0;
  line-height: 56px;
  white-space: nowrap;
}

.body span {
  white-space: pre;
}

.body .half {
  font-feature-settings: "hwid";
}

.body .indent {
  padding-left: 50px;
}

.return-mark {
  display: inline-block;
  vertical-align: 1px;
}

.wavy {
  text-decoration: underline wavy #2b6be4 1px;
  text-underline-offset: 2px;
}

.callout {
  position: absolute;
  top: 257px;
  left: 352px;
  width: 204px;
  height: 42px;
  border: 4px solid #d01224;
}

.speck {
  position: absolute;
  top: 514px;
  left: 1276px;
  width: 1px;
  height: 4px;
  border: 1px solid #d01224;
  border-width: 0 1px;
}

.page-foot {
  display: flex;
  justify-content: space-between;
  height: 43px;
  margin-top: 35px;
  padding: 0 126px;
}

.crop {
  width: 42px;
  border-top: 1px solid #a6a6a6;
}

.crop.left {
  border-right: 1px solid #a6a6a6;
}

.crop.right {
  border-left: 1px solid #a6a6a6;
}

.page-no {
  display: flex;
  align-items: center;
  align-self: flex-end;
  height: 10px;
  padding-left: 14px;
  font-family: "Liberation Serif", serif;
  font-size: 21px;
  color: #808080;
}

/* Barra de estado */
.statusbar {
  flex: none;
  height: 11px;
  overflow: hidden;
  border-top: 1px solid #c6c6c6;
  background: #f3f3f3;
  color: #333;
}

.status-inner {
  display: flex;
  align-items: center;
  height: 22px;
  padding-left: 10px;
  white-space: nowrap;
}

.w58 {
  width: 58px;
}

.w72 {
  width: 72px;
}

.w82 {
  width: 82px;
}

.w31 {
  width: 31px;
}

.w123 {
  width: 123px;
}

.w73 {
  width: 73px;
}

.a11y {
  display: flex;
  align-items: center;
  gap: 5px;
  font-weight: 500;
}

.views {
  display: flex;
  align-items: center;
  margin-left: auto;
  padding-right: 10px;
}

.views i {
  display: flex;
  align-items: center;
  justify-content: center;
  width: 40px;
  height: 22px;
}

.views .on {
  outline: none;
}

.views span {
  margin-left: 10px;
}

/* Ventana de detrás */
.behind {
  width: 13px;
  overflow: hidden;
  border-left: 1px solid #d4d4d4;
  background: #fff;
}

.behind-bar {
  height: 28px;
  padding: 18px 0 0 7px;
  background: #f3f4f8;
}

.behind-bar i {
  display: block;
  height: 16px;
  border-radius: 4px 0 0 4px;
  background: #dcdde1;
}

.behind-fav {
  height: 54px;
  padding: 21px 0 0 11px;
  overflow: hidden;
  border-bottom: 1px solid #e2e2e2;
}

.behind-fav i {
  display: block;
  width: 6px;
  height: 2px;
  margin-top: 34px;
  background: #f5c242;
}

.behind-logo {
  height: 30px;
  padding: 51px 0 0 6px;
}

.behind-logo i {
  display: block;
  width: 26px;
  height: 18px;
  border-radius: 50%;
  background: #0f4c94;
}

.behind-menu {
  height: 30px;
  padding-left: 5px;
  background: #1b6ac0;
  font-size: 13px;
  line-height: 30px;
  color: #fff;
}

.behind-item {
  height: 28px;
  padding-left: 9px;
  font-size: 13px;
  line-height: 28px;
}
</style>
